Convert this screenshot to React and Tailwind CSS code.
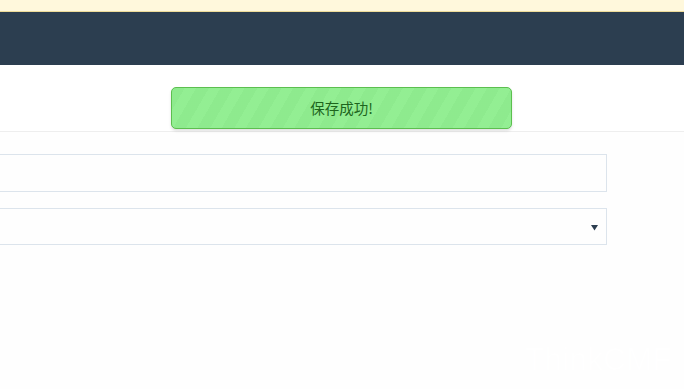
export default function App() {
  return (
    <div className="relative w-[684px] h-[389px] overflow-hidden bg-[#fefefe] font-['Liberation_Sans','Noto_Sans_CJK_SC',sans-serif]">
      <div className="h-[12px] bg-[#fff8dc] border-b border-[#eedc9a]" />
      <div className="h-[53px] bg-[#2c3e50]" />
      <div className="h-[67px] bg-white border-b border-[#eeeeee]" />
      <div className="flex flex-col gap-[16px] pt-[22px] ml-[-20px] mr-[77px]">
        <div className="h-[38px] bg-[#fefefe] border border-[#dce4ec]" />
        <div className="h-[37px] bg-[#fefefe] border border-[#dce4ec] flex items-center justify-end pr-[8px]">
          <svg width="7" height="7" viewBox="0 0 7 7" className="mt-[1px]">
            <path d="M0 1 L7 1 L3.5 6.5 Z" fill="#2c3e50" />
          </svg>
        </div>
      </div>
      <div className="absolute right-[12px] bottom-[14px] text-[31px] leading-none text-white tracking-[0.5px] font-['Liberation_Sans',sans-serif]">
        ThinkCMF
      </div>
      <div className="absolute left-[171px] top-[87px] w-[341px] h-[42px] rounded-[5px] border border-[#5cbf4f] bg-[#90ee90] bg-[image:repeating-linear-gradient(120deg,rgba(0,0,0,0.015)_0,rgba(0,0,0,0.015)_11px,rgba(255,255,255,0.03)_11px,rgba(255,255,255,0.03)_21px)] shadow-[0_2px_3px_rgba(0,0,0,0.12)] flex items-center justify-center">
        <span className="text-[14.5px] text-[#1d651d] font-['Noto_Sans_CJK_SC',sans-serif]">保存成功!</span>
      </div>
    </div>
  );
}
